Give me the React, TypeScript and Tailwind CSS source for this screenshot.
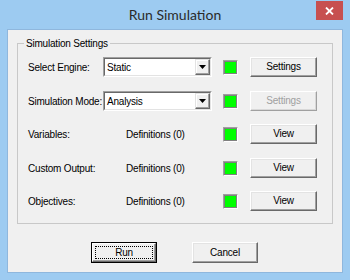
import { useState } from 'react';

const font = { fontFamily: '"Liberation Sans", Arial, sans-serif' };

function Raised({
  label,
  width = 'w-[67px]',
  disabled = false,
}: {
  label: string;
  width?: string;
  disabled?: boolean;
}) {
  return (
    <button
      type="button"
      className={`${width} h-[20px] bg-[#f0f0f0] border border-t-white border-l-white ${
        disabled
          ? 'border-r-[#a0a0a0] border-b-[#a0a0a0] shadow-[inset_-1px_-1px_0_#d8d8d8] text-[#a0a0a0]'
          : 'border-r-[#696969] border-b-[#696969] shadow-[inset_-1px_-1px_0_#a0a0a0,inset_1px_1px_0_#e3e3e3] text-black'
      } text-[10px] tracking-[-0.2px] leading-none flex items-center justify-center`}
    >
      {label}
    </button>
  );
}

function Combo({ value }: { value: string }) {
  return (
    <div className="w-[109px] h-[20px] border border-t-[#a0a0a0] border-l-[#a0a0a0] border-r-white border-b-white">
      <div className="h-full border border-t-[#696969] border-l-[#696969] border-r-[#e3e3e3] border-b-[#e3e3e3] bg-white flex">
        <div className="flex-1 pl-[2px] flex items-center text-[10px] tracking-[-0.2px] text-black">{value}</div>
        <div className="w-[15px] h-full bg-[#f0f0f0] border border-t-[#e3e3e3] border-l-[#e3e3e3] border-r-[#696969] border-b-[#696969] shadow-[inset_-1px_-1px_0_#a0a0a0,inset_1px_1px_0_#fff] flex items-center justify-center">
          <svg width="7" height="4" viewBox="0 0 7 4">
            <path d="M0 0h7L3.5 4z" fill="#000" />
          </svg>
        </div>
      </div>
    </div>
  );
}

function Status() {
  return (
    <div className="w-[15px] h-[15px] border border-t-[#a0a0a0] border-l-[#a0a0a0] border-r-white border-b-white">
      <div className="w-full h-full bg-[#00ff00] border border-[#808080]" />
    </div>
  );
}

function Row({
  label,
  labelWidth,
  mid,
  button,
  disabled,
  mt,
}: {
  label: string;
  labelWidth: string;
  mid: React.ReactNode;
  button: string;
  disabled?: boolean;
  mt: string;
}) {
  return (
    <div className={`flex items-center h-[20px] ${mt}`}>
      <div className={`${labelWidth} text-[10px] tracking-[-0.2px] text-black`}>{label}</div>
      {mid}
      <div className="ml-[11px]">
        <Status />
      </div>
      <div className="ml-[12px]">
        <Raised label={button} disabled={disabled} />
      </div>
    </div>
  );
}

export default function App() {
  const [engine] = useState('Static');
  const [mode] = useState('Analysis');

  const defs = (
    <div className="w-[86px] text-[10px] tracking-[-0.2px] text-black">Definitions (0)</div>
  );

  return (
    <div className="w-[350px] h-[280px] bg-[#9dcbf1] flex flex-col" style={font}>
      <div className="relative h-[29px] flex items-center justify-center">
        <span
          className="text-[14px] text-[#2a2a2a] mt-[-1px]"
          style={{ fontFamily: 'Lato, "Noto Sans", sans-serif' }}
        >
          Run Simulation
        </span>
        <div className="absolute right-[7px] top-[1px] w-[27px] h-[19px] bg-[#c75050] flex items-center justify-center">
          <svg width="9" height="8" viewBox="0 0 9 8">
            <path d="M1 0.5l7 7M8 0.5l-7 7" stroke="#fff" strokeWidth="1.8" />
          </svg>
        </div>
      </div>

      <div className="ml-[7px] w-[336px] h-[244px] bg-[#f0f0f0] border border-[#8fb7dd] flex flex-col">
        <div className="relative ml-[9px] mt-[13px] w-[316px] h-[181px] border border-[#c8c8c8] pl-[10px] pt-[13px]">
          <span className="absolute left-[6px] top-[-7px] px-[2px] bg-[#f0f0f0] text-[10px] tracking-[-0.2px] leading-[13px] text-black">
            Simulation Settings
          </span>
          <Row label="Select Engine:" labelWidth="w-[75px]" mid={<Combo value={engine} />} button="Settings" mt="mt-0" />
          <Row label="Simulation Mode:" labelWidth="w-[75px]" mid={<Combo value={mode} />} button="Settings" disabled mt="mt-[14px]" />
          <Row label="Variables:" labelWidth="w-[98px]" mid={defs} button="View" mt="mt-[13px]" />
          <Row label="Custom Output:" labelWidth="w-[98px]" mid={defs} button="View" mt="mt-[14px]" />
          <Row label="Objectives:" labelWidth="w-[98px]" mid={defs} button="View" mt="mt-[13px]" />
        </div>

        <div className="flex justify-center gap-[35px] mt-[18px] pr-[1px]">
          <div className="w-[66px] h-[21px] border border-black">
            <div className="w-full h-full bg-[#f0f0f0] border border-t-white border-l-white border-r-[#696969] border-b-[#696969] shadow-[inset_-1px_-1px_0_#a0a0a0] p-[2px]">
              <div className="w-full h-full border border-dotted border-black flex items-center justify-center text-[10px] tracking-[-0.2px] text-black">
                Run
              </div>
            </div>
          </div>
          <Raised label="Cancel" width="w-[66px] !h-[21px]" />
        </div>
      </div>
    </div>
  );
}
